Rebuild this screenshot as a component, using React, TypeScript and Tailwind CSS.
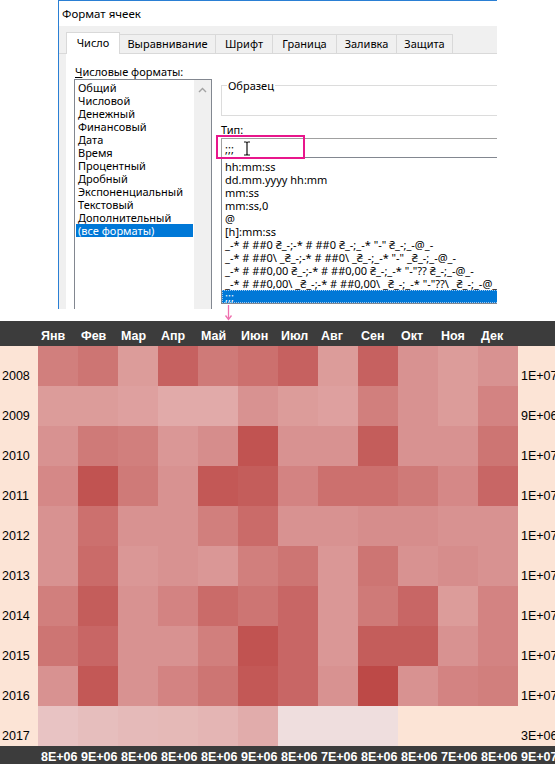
import type { ReactNode } from "react";

const months = ["Янв", "Фев", "Мар", "Апр", "Май", "Июн", "Июл", "Авг", "Сен", "Окт", "Ноя", "Дек"];

const years = [2008, 2009, 2010, 2011, 2012, 2013, 2014, 2015, 2016, 2017];

// heat level 0..10.5 per month, taken from the reference
const levels: number[][] = [
  [5, 6, 2, 8, 5.5, 6.5, 8, 2, 8, 3, 2, 3],
  [2, 2, 1.5, 0.5, 0.5, 3, 2, 1.5, 5, 3, 2, 4.5],
  [3, 5.5, 5, 2.5, 3.5, 9.5, 3, 3, 8.5, 3, 3, 6],
  [4, 9.5, 5.5, 3, 9, 8.5, 4.5, 6.5, 6.5, 5.5, 4, 7.5],
  [3, 6.5, 3, 3, 5, 7, 3, 3, 3.5, 3.5, 3, 3],
  [3, 7, 2.5, 3, 2.5, 5, 6, 2.5, 6, 3, 3.5, 3],
  [5, 8.5, 3, 4.5, 7, 6, 7.5, 2.5, 5.5, 7.5, 2, 4.5],
  [6, 7.5, 3, 3, 5, 9.5, 7.5, 2.5, 8.5, 8.5, 3, 4.5],
  [3, 9, 3, 4.5, 6, 9, 7.5, 3, 10.5, 3, 4.5, 5],
];

const lastRow: (string | null)[] = [
  "#e8c3c3", "#e6bebd", "#e5bab9", "#e5b9b7", "#e4b5b4", "#e1acab",
  "#efdede", "#efdede", "#efdede", null, null, null,
];

const rowTotals = ["1E+07", "9E+06", "1E+07", "1E+07", "1E+07", "1E+07", "1E+07", "1E+07", "1E+07", "3E+06"];
const colTotals = ["8E+06", "9E+06", "8E+06", "8E+06", "8E+06", "9E+06", "8E+06", "7E+06", "8E+06", "8E+06", "7E+06", "8E+06"];

const formats = ["Общий", "Числовой", "Денежный", "Финансовый", "Дата", "Время", "Процентный", "Дробный", "Экспоненциальный", "Текстовый", "Дополнительный", "(все форматы)"];

const types = [
  "hh:mm:ss",
  "dd.mm.yyyy hh:mm",
  "mm:ss",
  "mm:ss,0",
  "@",
  "[h]:mm:ss",
  '_-* # ##0 ₴_-;-* # ##0 ₴_-;_-* "-" ₴_-;_-@_-',
  '_-* # ##0\\ _₴_-;-* # ##0\\ _₴_-;_-* "-" _₴_-;_-@_-',
  '_-* # ##0,00 ₴_-;-* # ##0,00 ₴_-;_-* "-"?? ₴_-;_-@_-',
  '_-* # ##0,00\\ _₴_-;-* # ##0,00\\ _₴_-;_-* "-"??\\ _₴_-;_-@_-',
  ";;;",
];

const tabs = [
  { label: "Выравнивание", w: "w-[96px]" },
  { label: "Шрифт", w: "w-[57px]" },
  { label: "Граница", w: "w-[64px]" },
  { label: "Заливка", w: "w-[60px]" },
  { label: "Защита", w: "w-[56px]" },
];

function heat(t: number) {
  const k = t / 10;
  const light = [227, 175, 174];
  const dark = [191, 78, 76];
  const c = light.map((l, i) => Math.round(l + (dark[i] - l) * k));
  return `rgb(${c[0]},${c[1]},${c[2]})`;
}

function Cell({ color }: { color: string | null }) {
  return (
    <div
      className="h-[40px] bg-[#fce4d6]"
      style={color ? { backgroundColor: color } : undefined}
    />
  );
}

function Label({ children, className = "" }: { children: ReactNode; className?: string }) {
  return <div className={`flex items-end pl-[3px] leading-[15px] whitespace-nowrap ${className}`}>{children}</div>;
}

function FormatDialog() {
  return (
    <div className="ml-[58px] flex h-[309px] w-[439px] flex-col overflow-hidden border-l border-t border-[#2a7fd4] font-['Noto_Sans',sans-serif] text-[11px] text-black">
      <div className="flex h-[25px] shrink-0 items-center pl-[3px] text-[11.5px]">Формат ячеек</div>

      <div className="flex h-[28px] shrink-0 items-end border-b border-[#d9d9d9] bg-[#f0f0f0] pl-[7px]">
        <div className="relative z-10 -mb-px flex h-[22px] w-[54px] items-center justify-center border border-b-0 border-[#d9d9d9] bg-white pb-[1px]">
          Число
        </div>
        {tabs.map((t) => (
          <div
            key={t.label}
            className={`flex h-[19px] ${t.w} items-center justify-center border-r border-t border-[#d9d9d9]`}
          >
            {t.label}
          </div>
        ))}
      </div>

      <div className="flex min-h-0 flex-1 overflow-hidden">
        <div className="w-[7px] shrink-0 bg-[#f0f0f0]" />
        <div className="flex min-w-0 flex-1 bg-white pl-[8px]">
          <div className="w-[138px] shrink-0">
            <div className="mt-[11px] pl-[1px] leading-[13px]">
              <span className="underline">Ч</span>исловые форматы:
            </div>
            <div className="mt-[1px] flex h-[300px] border border-[#828790]">
              <div className="flex-1 px-[1px] pt-[1px]">
                {formats.map((f, i) => (
                  <div
                    key={f}
                    className={`pl-[2px] leading-[13px] whitespace-nowrap ${
                      i === formats.length - 1 ? "bg-[#0078d7] text-white" : ""
                    }`}
                  >
                    {f}
                  </div>
                ))}
              </div>
              <div className="flex w-[17px] justify-center bg-[#f0f0f0] pt-[7px]">
                <svg width="9" height="6" viewBox="0 0 9 6">
                  <path d="M1 5 L4.5 1.5 L8 5" fill="none" stroke="#a3a3a3" strokeWidth="1.4" />
                </svg>
              </div>
            </div>
          </div>

          <div className="ml-[9px] w-[300px] shrink-0">
            <fieldset className="mt-[25px] h-[37px] border border-[#dcdcdc] pl-[5px]">
              <legend className="px-[1px] leading-[13px]">Образец</legend>
            </fieldset>
            <div className="mt-[7px] leading-[13px]">Тип:</div>
            <div className="mt-[2px] flex h-[19px] items-center gap-[9px] border-l border-t border-[#a0a0a0] pl-[3px]">
              <span className="leading-[13px]">;;;</span>
              <svg width="8" height="15" viewBox="0 0 8 15">
                <path d="M1 1 H3 Q4 1 4 2.5 V12.5 Q4 14 3 14 H1 M7 1 H5 Q4 1 4 2.5 M4 12.5 Q4 14 5 14 H7" fill="none" stroke="#111" strokeWidth="1.2" />
              </svg>
            </div>
            <div className="h-[147px] border-l border-t border-b border-[#828790] pt-[2px]">
              {types.map((t, i) => (
                <div
                  key={t}
                  className={`pl-[3px] leading-[13px] whitespace-nowrap ${
                    i === types.length - 1
                      ? "bg-[#0078d7] text-white outline-1 -outline-offset-1 outline-dotted outline-[#9fc7ef]"
                      : ""
                  }`}
                >
                  {t}
                </div>
              ))}
            </div>
          </div>
        </div>
      </div>
    </div>
  );
}

export default function App() {
  return (
    <div className="h-[764px] w-[555px] overflow-hidden bg-white">
      <div className="relative h-[321px]">
        <FormatDialog />
        {/* highlight around the type field */}
        <div className="absolute left-[216px] top-[135px] h-[24px] w-[89px] border-2 border-[#e8168c]" />
        {/* pointer down to the sheet */}
        <svg className="absolute left-[224px] top-[305px]" width="9" height="16" viewBox="0 0 9 16">
          <path d="M4.5 0 V13" stroke="#ef6fae" strokeWidth="1.3" />
          <path d="M1.5 10.5 L4.5 14.5 L7.5 10.5" fill="none" stroke="#ef6fae" strokeWidth="1.3" />
        </svg>
      </div>

      <div className="grid grid-cols-[38px_repeat(12,40px)_37px] font-['Liberation_Sans',Arial,sans-serif] text-[12.5px]">
        {/* header band */}
        <div className="h-[25px] bg-[#3c3c3c]" />
        {months.map((m) => (
          <Label key={m} className="h-[25px] bg-[#3c3c3c] pb-[2px] font-bold text-white">
            {m}
          </Label>
        ))}
        <div className="h-[25px] bg-[#3c3c3c]" />

        {years.map((y, r) => (
          <div key={y} className="contents">
            <div className="flex h-[40px] items-end bg-[#fce4d6] pb-[2px] pl-[2px] leading-[15px] text-black">{y}</div>
            {months.map((m, c) => (
              <Cell key={m} color={r < levels.length ? heat(levels[r][c]) : lastRow[c]} />
            ))}
            <Label className="h-[40px] bg-[#fce4d6] pb-[2px] text-black">{rowTotals[r]}</Label>
          </div>
        ))}

        {/* totals band */}
        <div className="h-[18px] bg-[#3c3c3c]" />
        {colTotals.map((v, i) => (
          <div key={i} className="h-[18px] overflow-hidden bg-[#3c3c3c] pl-[3px] pt-[4px] leading-[15px] font-bold whitespace-nowrap text-white">
            {v}
          </div>
        ))}
        <div className="h-[18px] overflow-hidden bg-[#3c3c3c] pl-[3px] pt-[4px] leading-[15px] font-bold whitespace-nowrap text-white">
          9E+07
        </div>
      </div>
    </div>
  );
}
